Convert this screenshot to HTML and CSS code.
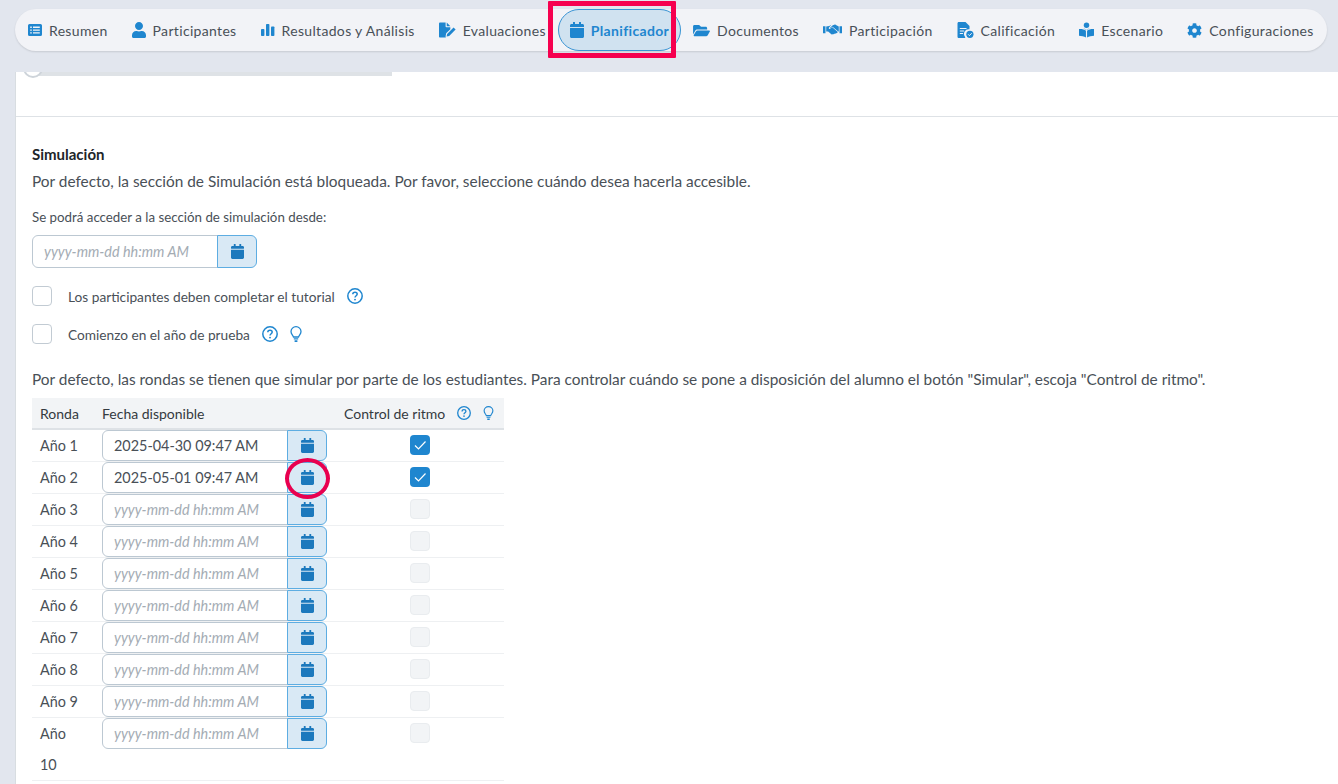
FILE: index.html
```html
<!DOCTYPE html>
<html lang="es">
<head>
<meta charset="utf-8">
<title>Planificador</title>
<link rel="stylesheet" href="styles.css">
</head>
<body>
<svg class="defs" width="0" height="0" aria-hidden="true">
  <symbol id="i-cal" viewBox="0 0 448 512"><path d="M12 192h424c6.600 0 12 5.400 12 12v260c0 26.500-21.500 48-48 48H48c-26.500 0-48-21.500-48-48V204c0-6.600 5.400-12 12-12zm436-44v-36c0-26.500-21.500-48-48-48h-48V12c0-6.600-5.400-12-12-12h-40c-6.600 0-12 5.400-12 12v52H160V12c0-6.600-5.400-12-12-12h-40c-6.600 0-12 5.400-12 12v52H48C21.500 64 0 85.500 0 112v36c0 6.600 5.400 12 12 12h424c6.600 0 12-5.400 12-12z"/></symbol>
  <symbol id="i-list" viewBox="0 0 14 14"><path fill-rule="evenodd" d="M1.500 1h11A1.500 1.500 0 0 1 14 2.500v9a1.500 1.500 0 0 1-1.500 1.500h-11A1.500 1.500 0 0 1 0 11.500v-9A1.500 1.500 0 0 1 1.500 1zM2.200 3.600v1.300h1.600V3.600zm2.800 0v1.300h6.800V3.600zM2.200 6.400v1.300h1.600V6.400zm2.800 0v1.300h6.800V6.400zM2.200 9.200v1.300h1.600V9.200zm2.800 0v1.300h6.800V9.200z"/></symbol>
  <symbol id="i-user" viewBox="0 0 448 512"><path d="M224 256c70.700 0 128-57.300 128-128S294.700 0 224 0 96 57.300 96 128s57.300 128 128 128zm89.600 32h-16.700c-22.200 10.200-46.900 16-72.900 16s-50.600-5.800-72.900-16h-16.700C60.200 288 0 348.200 0 422.400V464c0 26.500 21.500 48 48 48h352c26.500 0 48-21.500 48-48v-41.600c0-74.200-60.200-134.400-134.400-134.400z"/></symbol>
  <symbol id="i-bars" viewBox="0 0 14 14"><rect x="0" y="6" width="3.400" height="7" rx=".8"/><rect x="5" y="1" width="3.400" height="12" rx=".8"/><rect x="10" y="3.500" width="3.400" height="9.500" rx=".8"/></symbol>
  <symbol id="i-sign" viewBox="0 0 18 16"><path d="M1.200 0H7v4.200c0 .5.400.9.900.9H12v2L7.600 11.500 7 14.500l.2 1.500H1.200C.5 16 0 15.500 0 14.800V1.200C0 .5.500 0 1.200 0zM8.200 0 12 3.900H8.200z"/><path d="M8.600 12.200 15.400 5.400l2.200 2.200-6.800 6.800-2.800.6z"/></symbol>
  <symbol id="i-folder" viewBox="0 0 576 512"><path d="M572.694 292.093L500.270 416.248A63.997 63.997 0 0 1 444.989 448H45.025c-18.523 0-30.064-20.093-20.731-36.093l72.424-124.155A64 64 0 0 1 152 256h399.964c18.523 0 30.064 20.093 20.730 36.093zM152 224h328v-48c0-26.510-21.490-48-48-48H272l-64-64H48C21.490 64 0 85.490 0 112v278.046l69.077-118.418C86.214 242.250 117.989 224 152 224z"/></symbol>
  <symbol id="i-hands" viewBox="0 0 20 12"><path d="M0 2h2.600v7.500H0zM17.400 2H20v7.500h-2.600z"/><path d="M3.400 2.200 6.600 1.700 8.800.6 6.200 3.600c-.5.700.4 1.700 1.200 1.100L9.800 3l5.800 5.100-.6.900c-.4.500-1 .4-1.300.1-.1.800-.9 1.100-1.500.7-.2.700-1 1-1.600.5-.4.600-1.200.7-1.800.2L5.400 7.700H3.400z"/><path d="M10.300 1 12 .4c.6-.2 1.100 0 1.600.3l3 1.500v5.400h-.5L10 2.600 8.200 4c-.5.400-1 0-.7-.4z"/></symbol>
  <symbol id="i-grade" viewBox="0 0 16 16"><path d="M1.300 0H8l4 4v3.200A4.800 4.800 0 0 0 7.600 15c-.1.300.1.700.3 1H1.300C.6 16 0 15.400 0 14.700V1.300C0 .6.600 0 1.300 0z"/><path fill="#f2f3f7" d="M2.300 6h6.700v1.100H2.300zM2.300 8.500h4.300v1.100H2.300zM2.300 11h3.300v1.100H2.300z"/><circle cx="12.400" cy="12.300" r="3.600"/><path d="m10.600 12.300 1.300 1.300 2.300-2.400" fill="none" stroke="#f2f3f7" stroke-width="1"/></symbol>
  <symbol id="i-book" viewBox="0 0 16 16"><circle cx="8" cy="2.900" r="2.900"/><path d="M4.600 6.600c1.500 0 2.800.4 3.400 1.100.6-.7 1.900-1.100 3.400-1.100l-3.400 1zM0 6.900c2.900-.2 6 .5 7.400 1.800V16C5.400 14.800 2.600 14.100 0 14zM16 6.900c-2.900-.2-6 .5-7.400 1.800V16c2-1.200 4.800-1.900 7.400-2z"/></symbol>
  <symbol id="i-cog" viewBox="0 0 512 512"><path d="M487.400 315.700l-42.600-24.600c4.300-23.200 4.300-47 0-70.200l42.600-24.600c4.900-2.800 7.100-8.600 5.500-14-11.100-35.600-30-67.800-54.700-94.600-3.800-4.100-10-5.100-14.800-2.300L380.800 110c-17.900-15.400-38.500-27.300-60.800-35.100V25.800c0-5.600-3.900-10.500-9.400-11.700-36.700-8.200-74.300-7.800-109.200 0-5.500 1.200-9.400 6.100-9.400 11.700V75c-22.200 7.900-42.800 19.800-60.800 35.100L88.700 85.500c-4.900-2.800-11-1.900-14.800 2.300-24.700 26.700-43.600 58.900-54.700 94.600-1.700 5.400.6 11.200 5.500 14L67.300 221c-4.300 23.200-4.300 47 0 70.200l-42.600 24.600c-4.900 2.800-7.100 8.600-5.500 14 11.100 35.600 30 67.800 54.700 94.600 3.800 4.100 10 5.100 14.800 2.300l42.600-24.600c17.900 15.400 38.500 27.300 60.800 35.100v49.200c0 5.600 3.900 10.500 9.400 11.700 36.700 8.200 74.300 7.800 109.200 0 5.500-1.200 9.400-6.100 9.400-11.700v-49.200c22.200-7.900 42.800-19.800 60.800-35.100l42.600 24.600c4.900 2.800 11 1.900 14.800-2.300 24.700-26.700 43.600-58.900 54.700-94.600 1.500-5.500-.7-11.300-5.600-14.100zM256 336c-44.100 0-80-35.900-80-80s35.900-80 80-80 80 35.900 80 80-35.900 80-80 80z"/></symbol>
  <symbol id="i-help" viewBox="0 0 16 16"><circle cx="8" cy="8" r="7.200" fill="none" stroke="currentColor" stroke-width="1.500"/><path d="M5.800 6.300c0-1.300 1-2.100 2.200-2.100s2.200.8 2.200 1.900c0 1.600-2.200 1.700-2.200 3.400" fill="none" stroke="currentColor" stroke-width="1.500"/><circle cx="8" cy="11.600" r=".95" fill="currentColor"/></symbol>
  <symbol id="i-bulb" viewBox="0 0 12 16"><path d="M3.500 11C3 9.200 1 8.200 1 5.500a5 4.800 0 0 1 10 0c0 2.700-2 3.700-2.500 5.500z" fill="none" stroke="currentColor" stroke-width="1.300"/><path d="M3.800 12.300h4.400v1.200H3.800zM4.600 14.300h2.800V16H4.600z" fill="currentColor"/></symbol>
</svg>

<header class="topbar">
  <nav class="tabs">
    <a class="tab"><svg class="ti ti-14"><use href="#i-list"/></svg><span class="tl">Resumen</span></a>
    <a class="tab"><svg class="ti ti-user"><use href="#i-user"/></svg><span class="tl">Participantes</span></a>
    <a class="tab"><svg class="ti ti-14"><use href="#i-bars"/></svg><span class="tl">Resultados y Análisis</span></a>
    <a class="tab"><svg class="ti ti-sign"><use href="#i-sign"/></svg><span class="tl">Evaluaciones</span></a>
    <a class="tab tab-on"><svg class="ti ti-cal"><use href="#i-cal"/></svg><span class="tl">Planificador</span></a>
    <a class="tab"><svg class="ti ti-folder"><use href="#i-folder"/></svg><span class="tl">Documentos</span></a>
    <a class="tab"><svg class="ti ti-hands"><use href="#i-hands"/></svg><span class="tl">Participación</span></a>
    <a class="tab"><svg class="ti ti-sign"><use href="#i-grade"/></svg><span class="tl">Calificación</span></a>
    <a class="tab"><svg class="ti ti-book"><use href="#i-book"/></svg><span class="tl">Escenario</span></a>
    <a class="tab"><svg class="ti ti-cog"><use href="#i-cog"/></svg><span class="tl">Configuraciones</span></a>
  </nav>
</header>

<main class="panel">
  <div class="slider"><span class="thumb"></span></div>
  <hr class="rule">
  <section class="sim">
    <h2 class="title">Simulación</h2>
    <p class="lead">Por defecto, la sección de Simulación está bloqueada. Por favor, seleccione cuándo desea hacerla accesible.</p>
    <label class="lab">Se podrá acceder a la sección de simulación desde:</label>
    <div class="picker picker-top">
      <span class="field ph">yyyy-mm-dd hh:mm AM</span>
      <span class="calbtn"><svg class="cal"><use href="#i-cal"/></svg></span>
    </div>
    <div class="check-row check-a">
      <span class="box"></span><span class="check-text">Los participantes deben completar el tutorial</span>
      <svg class="help help-a"><use href="#i-help"/></svg>
    </div>
    <div class="check-row check-b">
      <span class="box"></span><span class="check-text">Comienzo en el año de prueba</span>
      <svg class="help help-b"><use href="#i-help"/></svg>
      <svg class="bulb bulb-b"><use href="#i-bulb"/></svg>
    </div>
    <p class="lead lead-2">Por defecto, las rondas se tienen que simular por parte de los estudiantes. Para controlar cuándo se pone a disposición del alumno el botón "Simular", escoja "Control de ritmo".</p>

    <table class="rounds">
      <colgroup><col class="c1"><col class="c2"><col class="c3"></colgroup>
      <thead>
        <tr>
          <th>Ronda</th>
          <th>Fecha disponible</th>
          <th><span class="th-flex">Control de ritmo<svg class="help help-t"><use href="#i-help"/></svg><svg class="bulb bulb-t"><use href="#i-bulb"/></svg></span></th>
        </tr>
      </thead>
      <tbody>
        <tr><td>Año 1</td><td class="pc"><div class="picker"><span class="field">2025-04-30 09:47 AM</span><span class="calbtn"><svg class="cal"><use href="#i-cal"/></svg></span></div></td><td class="cc"><span class="tick"><svg viewBox="0 0 20 20"><path d="m5 10.500 3.500 3.500 7-7.500" fill="none" stroke="#fff" stroke-width="1.200"/></svg></span></td></tr>
        <tr><td>Año 2</td><td class="pc"><div class="picker"><span class="field">2025-05-01 09:47 AM</span><span class="calbtn"><svg class="cal"><use href="#i-cal"/></svg></span></div></td><td class="cc"><span class="tick"><svg viewBox="0 0 20 20"><path d="m5 10.500 3.500 3.500 7-7.500" fill="none" stroke="#fff" stroke-width="1.200"/></svg></span></td></tr>
        <tr><td>Año 3</td><td class="pc"><div class="picker"><span class="field ph">yyyy-mm-dd hh:mm AM</span><span class="calbtn"><svg class="cal"><use href="#i-cal"/></svg></span></div></td><td class="cc"><span class="off"></span></td></tr>
        <tr><td>Año 4</td><td class="pc"><div class="picker"><span class="field ph">yyyy-mm-dd hh:mm AM</span><span class="calbtn"><svg class="cal"><use href="#i-cal"/></svg></span></div></td><td class="cc"><span class="off"></span></td></tr>
        <tr><td>Año 5</td><td class="pc"><div class="picker"><span class="field ph">yyyy-mm-dd hh:mm AM</span><span class="calbtn"><svg class="cal"><use href="#i-cal"/></svg></span></div></td><td class="cc"><span class="off"></span></td></tr>
        <tr><td>Año 6</td><td class="pc"><div class="picker"><span class="field ph">yyyy-mm-dd hh:mm AM</span><span class="calbtn"><svg class="cal"><use href="#i-cal"/></svg></span></div></td><td class="cc"><span class="off"></span></td></tr>
        <tr><td>Año 7</td><td class="pc"><div class="picker"><span class="field ph">yyyy-mm-dd hh:mm AM</span><span class="calbtn"><svg class="cal"><use href="#i-cal"/></svg></span></div></td><td class="cc"><span class="off"></span></td></tr>
        <tr><td>Año 8</td><td class="pc"><div class="picker"><span class="field ph">yyyy-mm-dd hh:mm AM</span><span class="calbtn"><svg class="cal"><use href="#i-cal"/></svg></span></div></td><td class="cc"><span class="off"></span></td></tr>
        <tr><td>Año 9</td><td class="pc"><div class="picker"><span class="field ph">yyyy-mm-dd hh:mm AM</span><span class="calbtn"><svg class="cal"><use href="#i-cal"/></svg></span></div></td><td class="cc"><span class="off"></span></td></tr>
        <tr><td>Año 10</td><td class="pc"><div class="picker"><span class="field ph">yyyy-mm-dd hh:mm AM</span><span class="calbtn"><svg class="cal"><use href="#i-cal"/></svg></span></div></td><td class="cc"><span class="off"></span></td></tr>
      </tbody>
    </table>
  </section>
</main>

<div class="mark-rect"></div>
<div class="mark-circle"></div>
</body>
</html>
```

FILE: styles.css
```css
* { box-sizing: border-box; }
html, body { margin: 0; height: 100%; }
body {
  position: relative;
  height: 784px;
  overflow: hidden;
  background: #e2e6ee;
  color: #495057;
  font-family: "Lato", "Open Sans", sans-serif;
  font-size: 14px;
}
.defs { position: absolute; }

.topbar { height: 72px; padding: 9px 0 0 15px; }
.tabs {
  display: inline-flex;
  align-items: stretch;
  height: 42px;
  padding: 0 1px;
  border-radius: 21px;
  background: #f2f3f7;
  box-shadow: 0 1px 2px rgba(0, 0, 0, .12);
}
.tab {
  display: flex;
  align-items: center;
  padding: 0 11px;
  border: 1px solid transparent;
  border-radius: 21px;
  white-space: nowrap;
  letter-spacing: .33px;
}
.tl { display: block; }
.tab-on {
  background: #d0e2f0;
  border-color: #3a94d4;
  color: #1f86cf;
  font-weight: 700;
  margin: 0;
}
.ti { fill: #1f86cf; margin-right: 7px; flex: none; }
.ti-14 { width: 14px; height: 14px; }
.ti-user { width: 14px; height: 16px; }
.ti-sign { width: 17px; height: 16px; }
.ti-cal { width: 14px; height: 16px; }
.ti-folder { width: 17px; height: 15px; }
.ti-hands { width: 19px; height: 12px; }
.ti-book { width: 15px; height: 16px; }
.ti-cog { width: 15px; height: 15px; }

.panel {
  position: relative;
  height: 712px;
  margin-left: 15px;
  background: #fff;
  border-left: 1px solid #d8dde1;
  overflow: hidden;
}
.slider {
  position: relative;
  width: 360px;
  height: 4px;
  margin-left: 16px;
  background: #dee2e6;
}
.thumb {
  position: absolute;
  left: -9px;
  top: -14px;
  width: 20px;
  height: 20px;
  border-radius: 50%;
  background: #fff;
  border: 2px solid #ced4da;
}
.rule { margin: 40px 0 0; border: 0; border-top: 1px solid #dee2e6; }
.sim { padding: 0 16px; }
.title { margin: 28px 0 0; height: 18px; font-size: 15px; line-height: 18px; font-weight: 700; color: #212529; }
.lead { margin: 0; font-size: 15.400px; line-height: 20px; }
.title + .lead { margin-top: 8px; }
.lab { display: block; margin-top: 17px; font-size: 13.300px; line-height: 18px; }
.picker { display: flex; height: 31px; width: 225px; }
.picker-top { height: 33px; margin-top: 9px; }
.field {
  display: flex;
  align-items: center;
  width: 186px;
  padding-left: 11px;
  background: #fff;
  border: 1px solid #bcc8d2;
  border-right-width: 1px;
  border-radius: 6px 0 0 6px;
  font-size: 14.400px;
  color: #495057;
  white-space: nowrap;
}
.ph { color: #a4acb4; font-style: italic; }
.calbtn {
  display: flex;
  align-items: center;
  justify-content: center;
  width: 40px;
  margin-left: -1px;
  background: #d9e9f5;
  border: 1px solid #5dade2;
  border-radius: 0 6px 6px 0;
}
.cal { width: 13px; height: 15px; fill: #1c79bd; }

.check-row { display: flex; align-items: center; height: 20px; font-size: 13.700px; }
.check-a { margin-top: 18px; }
.check-b { margin-top: 18px; }
.box {
  width: 20px;
  height: 20px;
  border: 1px solid #c2cbd3;
  border-radius: 4px;
  background: #fff;
  margin-right: 16px;
  flex: none;
}
.help { width: 16px; height: 16px; color: #1f86cf; flex: none; }
.bulb { width: 12px; height: 16px; color: #1f86cf; flex: none; }
.help-a { margin-left: 12px; }
.help-b { margin-left: 12px; }
.bulb-b { margin-left: 12px; }
.lead-2 { margin-top: 25px; }

.rounds {
  margin-top: 9px;
  width: 472px;
  table-layout: fixed;
  border-collapse: separate;
  border-spacing: 0;
}
.c1 { width: 62px; }
.c2 { width: 242px; }
.c3 { width: 168px; }
.rounds th {
  height: 32px;
  padding: 0 8px;
  background: #f2f4f6;
  border-bottom: 2px solid #dee2e6;
  text-align: left;
  font-weight: 400;
  font-size: 14px;
  color: #343a40;
}
.th-flex { display: flex; align-items: center; }
.help-t { width: 14px; height: 14px; margin-left: 12px; }
.bulb-t { width: 11px; height: 14px; margin-left: 12px; }
.rounds td {
  height: 32px;
  padding: 0 8px;
  border-bottom: 1px solid #eef0f2;
  font-size: 14.400px;
  vertical-align: top;
  line-height: 31px;
}
.rounds td.pc { padding: 0 0 0 8px; }
.rounds td.cc { text-align: center; padding: 0; line-height: 0; }
.tick, .off {
  display: inline-block;
  width: 20px;
  height: 20px;
  margin-top: 5px;
  border-radius: 4px;
}
.tick { background: #1f86cf; }
.tick svg { display: block; width: 20px; height: 20px; }
.off { background: #f2f4f6; border: 1px solid #e9ecef; }

.mark-rect {
  position: absolute;
  left: 548px;
  top: 1px;
  width: 128px;
  height: 57px;
  border: 5px solid #f6004f;
  border-radius: 1px;
}
.mark-circle {
  position: absolute;
  left: 285px;
  top: 458px;
  width: 45px;
  height: 41px;
  border: 4px solid #e8004f;
  border-radius: 50%;
}
```
